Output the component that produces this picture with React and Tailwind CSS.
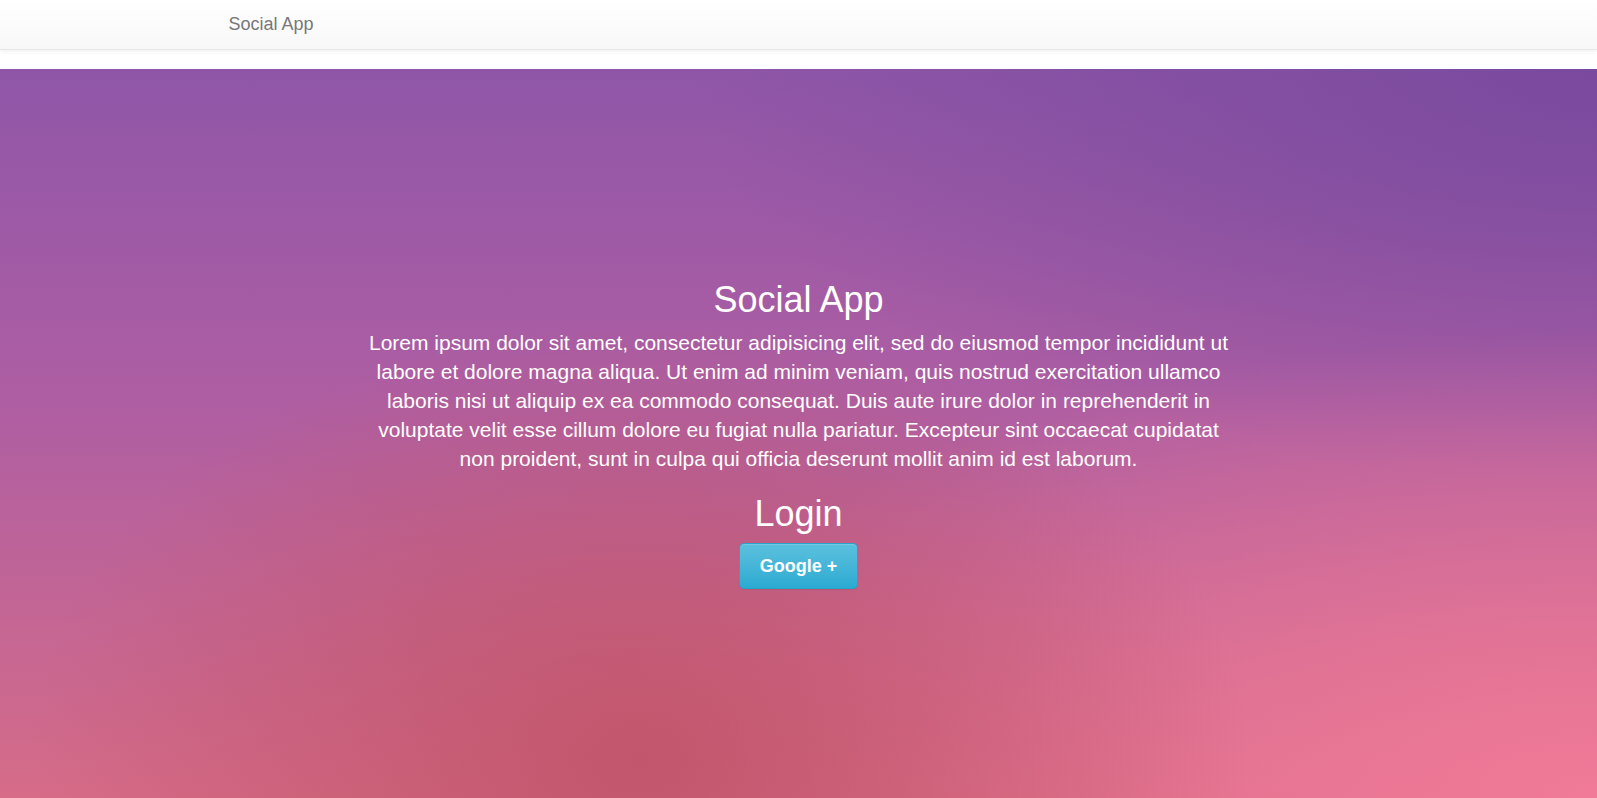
import React from "react";

const Navbar = () => (
  <nav className="h-[50px] border-b border-[#e7e7e7] bg-gradient-to-b from-white to-[#f8f8f8] shadow-[inset_0_1px_0_rgba(255,255,255,0.15),0_1px_5px_rgba(0,0,0,0.075)] mb-[19px]">
    <div className="w-[1170px] mx-auto px-[15px] flex items-center h-full">
      <a href="#" className="text-[18px] leading-[20px] text-[#777] -mt-[2px]">
        Social App
      </a>
    </div>
  </nav>
);

const Hero = () => (
  <section className="h-[calc(100vh-69px)] flex items-center justify-center text-white text-center bg-[radial-gradient(ellipse_at_40%_95%,#c2566c_0%,rgba(194,86,108,0)_45%),radial-gradient(ellipse_at_100%_100%,#f07a98_0%,rgba(240,122,152,0)_45%),radial-gradient(ellipse_at_100%_0%,#7a4a9e_0%,rgba(122,74,158,0)_40%),linear-gradient(to_bottom,#8f56a8,#ae5ea3_45%,#d66c88)]">
    <div className="w-[890px] px-[8px] mt-[1px]">
      <h1 className="text-[36px] leading-[40px] mb-[8px]">Social App</h1>
      <p className="text-[21px] leading-[29px] mb-[21px]">
        Lorem ipsum dolor sit amet, consectetur adipisicing elit, sed do eiusmod tempor incididunt ut labore et dolore magna aliqua. Ut enim ad minim veniam, quis nostrud exercitation ullamco laboris nisi ut aliquip ex ea commodo consequat. Duis aute irure dolor in reprehenderit in voluptate velit esse cillum dolore eu fugiat nulla pariatur. Excepteur sint occaecat cupidatat non proident, sunt in culpa qui officia deserunt mollit anim id est laborum.
      </p>
      <h2 className="text-[36px] leading-[40px] mb-[9px]">Login</h2>
      <button className="px-[20px] py-[10px] text-[18px] leading-[24px] font-bold rounded-[5px] border border-[#28a4c9] bg-gradient-to-b from-[#5bc0de] to-[#2aabd2] shadow-[inset_0_1px_0_rgba(255,255,255,0.15),0_1px_1px_rgba(0,0,0,0.075)]">
        Google +
      </button>
    </div>
  </section>
);

export default function App() {
  return (
    <div className="font-['Liberation_Sans',Arial,sans-serif] bg-white min-h-screen">
      <Navbar />
      <Hero />
    </div>
  );
}
